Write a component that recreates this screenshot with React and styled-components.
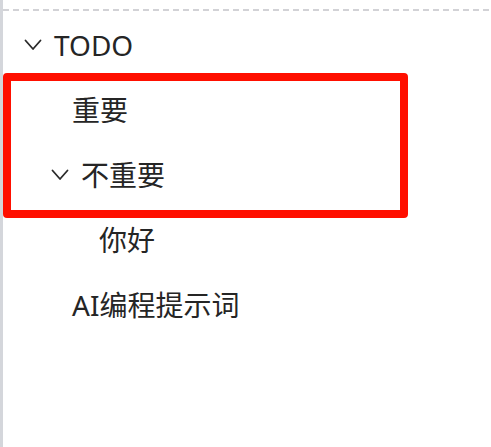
import React from 'react';
import styled, { createGlobalStyle } from 'styled-components';

const GlobalStyle = createGlobalStyle`
    html, body {
        margin: 0;
        padding: 0;
        background: #ffffff;
    }
`;

const Panel = styled.div`
    position: relative;
    box-sizing: border-box;
    height: 447px;
    padding-top: 9px;
    border-left: 3px solid #d4d6db;
    font-family: 'Noto Sans', 'Noto Sans CJK SC', sans-serif;
    color: #252525;
`;

const DashedRule = styled.div`
    height: 2px;
    background: repeating-linear-gradient(
        to right,
        #d2d2d6 0px,
        #d2d2d6 6px,
        transparent 6px,
        transparent 10px
    );
`;

const Tree = styled.div`
    display: flex;
    flex-direction: column;
    padding-top: 1px;
`;

const Row = styled.div`
    display: flex;
    align-items: center;
    height: 65px;
    padding-left: ${(p) => 21 + p.level * 27}px;
    font-size: 28px;
    line-height: 1;
    white-space: nowrap;
`;

const Chevron = styled.svg`
    width: 18px;
    height: 12px;
    margin-right: 12px;
    flex-shrink: 0;
`;

const LeafSpacer = styled.span`
    display: inline-block;
    width: 21px;
    flex-shrink: 0;
`;

const Highlight = styled.div`
    position: absolute;
    left: 0;
    top: 73px;
    width: 405px;
    height: 145px;
    box-sizing: border-box;
    border: 8px solid #ff0f00;
    border-radius: 4px;
    pointer-events: none;
`;

const nodes = [
    { label: 'TODO', level: 0, open: true },
    { label: '重要', level: 1 },
    { label: '不重要', level: 1, open: true },
    { label: '你好', level: 2 },
    { label: 'AI编程提示词', level: 1 },
];

const TreeRow = ({ label, level, open }) => (
    <Row level={level}>
        {open ? (
            <Chevron viewBox="0 0 18 12">
                <path
                    d="M1.5 1.5 L9 10 L16.5 1.5"
                    fill="none"
                    stroke="#2a2a2a"
                    strokeWidth="1.8"
                    strokeLinecap="round"
                    strokeLinejoin="round"
                />
            </Chevron>
        ) : (
            <LeafSpacer />
        )}
        <span>{label}</span>
    </Row>
);

const App = () => (
    <>
        <GlobalStyle />
        <Panel>
            <DashedRule />
            <Tree>
                {nodes.map((n) => (
                    <TreeRow key={n.label} {...n} />
                ))}
            </Tree>
            <Highlight />
        </Panel>
    </>
);

export default App;
